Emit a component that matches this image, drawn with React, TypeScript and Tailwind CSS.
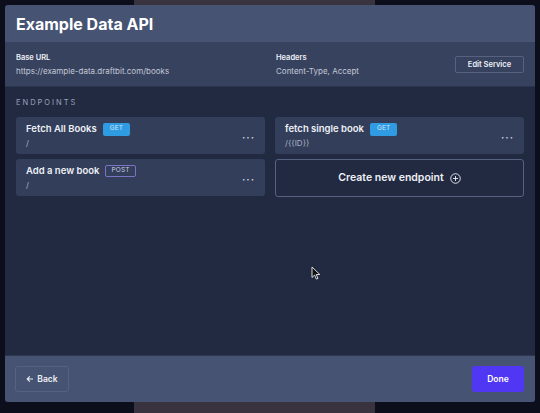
import React from 'react';

const font = { fontFamily: 'Inter, "Noto Sans", sans-serif' };

const Badge: React.FC<{ method: 'GET' | 'POST' }> = ({ method }) =>
    method === 'GET' ? (
        <span className="flex h-[13px] items-center rounded-[2px] bg-[#2f9be3] px-[7px] text-[6.5px] tracking-wide text-[#cfe6fb]">GET</span>
    ) : (
        <span className="flex h-[12px] items-center rounded-[2px] border border-[#7c73c4] px-[5px] text-[6.5px] tracking-wide text-[#c9cce0]">POST</span>
    );

const EndpointCard: React.FC<{ name: string; method: 'GET' | 'POST'; path: string }> = ({ name, method, path }) => (
    <div className="flex h-[37px] items-center justify-between rounded-[3px] bg-[#333e5b] pl-[10px] pr-[10px]">
        <div className="flex flex-col gap-[1px]">
            <div className="flex items-center gap-[6px]">
                <span className="text-[9.5px] font-semibold text-[#eef0f5]">{name}</span>
                <Badge method={method} />
            </div>
            <span className="text-[8px] text-[#aab2c4]">{path}</span>
        </div>
        <span className="mt-[2px] text-[10px] font-bold leading-none tracking-[1px] text-[#c8cdd8]">···</span>
    </div>
);

export default function App() {
    return (
        <div
            className="relative h-[413px] w-[540px] bg-[linear-gradient(to_right,#0c0f1b_134px,#38333e_134px,#38333e_375px,#0c0f1b_375px)] p-[5px]"
            style={font}
        >
            <div className="flex h-[397px] w-[530px] flex-col overflow-hidden rounded-[3px] bg-[#222a42]">
                {/* Header */}
                <div className="flex h-[37px] items-center bg-[#465373] px-[11px]">
                    <h1 className="text-[16px] font-bold text-white">Example Data API</h1>
                </div>

                {/* Service info */}
                <div className="grid h-[45px] grid-cols-2 gap-[10px] border-b border-[#2c3550] bg-[#37425f] px-[11px] pt-[10px]">
                    <div className="flex flex-col gap-[2px]">
                        <span className="text-[7.5px] font-semibold text-[#eef0f5]">Base URL</span>
                        <span className="text-[8px] text-[#c3c8d4]">https://example-data.draftbit.com/books</span>
                    </div>
                    <div className="flex items-start justify-between pl-[1px]">
                        <div className="flex flex-col gap-[2px]">
                            <span className="text-[7.5px] font-semibold text-[#eef0f5]">Headers</span>
                            <span className="text-[8px] text-[#c3c8d4]">Content-Type, Accept</span>
                        </div>
                        <button className="mt-[4px] h-[17px] w-[69px] rounded-[2px] border border-[#56627f] text-[7.5px] font-semibold text-[#eef0f5]">
                            Edit Service
                        </button>
                    </div>
                </div>

                {/* Endpoints */}
                <div className="flex-1 px-[11px] pt-[10px]">
                    <div className="mb-[9px] text-[7.5px] tracking-[2px] text-[#9aa2b6]">ENDPOINTS</div>
                    <div className="grid grid-cols-2 gap-x-[10px] gap-y-[5px]">
                        <EndpointCard name="Fetch All Books" method="GET" path="/" />
                        <EndpointCard name="fetch single book" method="GET" path="/{{ID}}" />
                        <EndpointCard name="Add a new book" method="POST" path="/" />
                        <button className="flex h-[38px] items-center justify-center gap-[6px] rounded-[3px] border border-[#56627f] text-[10.5px] font-semibold text-[#eef0f5]">
                            Create new endpoint
                            <svg width="11" height="11" viewBox="0 0 12 12" fill="none" stroke="currentColor" strokeWidth="1">
                                <circle cx="6" cy="6" r="5.2" />
                                <path d="M6 3.3v5.4M3.3 6h5.4" />
                            </svg>
                        </button>
                    </div>
                </div>

                {/* Footer */}
                <div className="flex h-[47px] items-center justify-between border-t border-[#2e3752] bg-[#465373] pl-[10px] pr-[11px]">
                    <button className="flex h-[26px] w-[54px] items-center justify-center gap-[3px] rounded-[3px] border border-[#56627f] text-[8.5px] font-semibold text-[#eef0f5]">
                        <svg width="8" height="8" viewBox="0 0 8 8" fill="none" stroke="currentColor" strokeWidth="1.1">
                            <path d="M7 4H1.2M3.8 1.4L1.2 4l2.6 2.6" />
                        </svg>
                        Back
                    </button>
                    <button className="h-[26px] w-[52px] rounded-[3px] bg-[#5037f3] text-[8.5px] font-semibold text-white">
                        Done
                    </button>
                </div>
            </div>

            {/* Mouse cursor */}
            <svg className="absolute left-[311px] top-[266px]" width="10" height="14" viewBox="0 0 10 14">
                <path d="M1 1v10.5l2.6-2.4 1.8 4 1.6-.7-1.8-3.9H8.8z" fill="#111" stroke="#eee" strokeWidth="0.9" />
            </svg>
        </div>
    );
}
